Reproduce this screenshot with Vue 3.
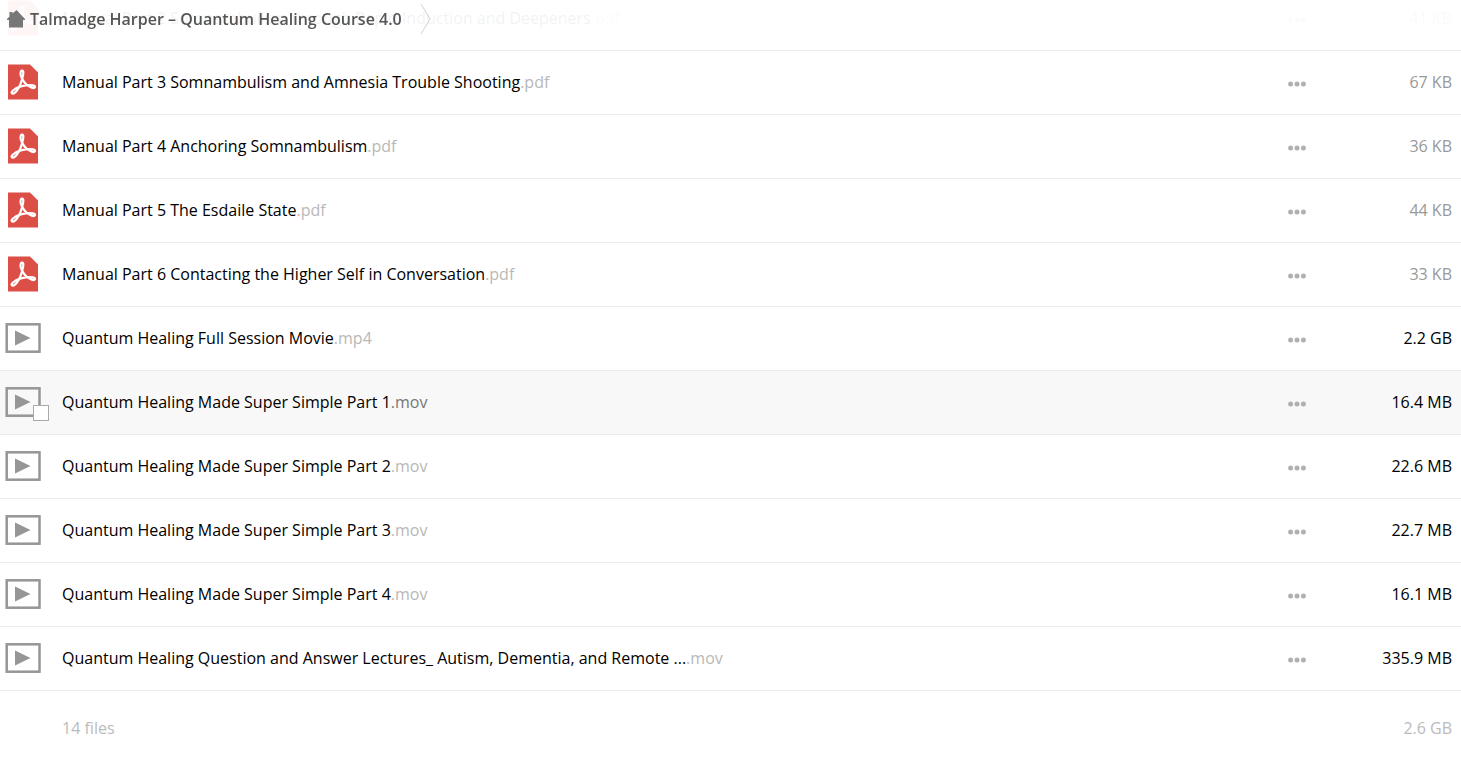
<template>
  <div class="folder">
    <header class="breadcrumbs">
      <a href="#" class="crumb">
        <svg class="home" viewBox="0 0 18 18" aria-hidden="true">
          <path d="M9.500 0 L18 9 V10 H16 V17.500 H2 V10 H0 V9 L2.500 6.400 V2 H5.500 V3.600 Z" />
        </svg>
        <span>Talmadge Harper – Quantum Healing Course 4.0</span>
      </a>
      <svg class="chevron" viewBox="0 0 12 32" aria-hidden="true">
        <path d="M1 1 L10 16 L1 31" />
      </svg>
    </header>

    <main>
      <ul class="files">
        <li v-for="file in files" :key="file.name" class="file" :class="{ hovered: file.hovered }">
          <div class="thumb">
            <svg v-if="file.ext === 'pdf'" class="icon" viewBox="0 0 36 36" aria-hidden="true">
              <path class="pdf-page" d="M3 0.500 H25 L33 8.500 V35.500 H3 Z" />
              <path
                class="pdf-mark"
                d="M17 14.500 C15 11 15 7 17 6.500 C19 6.500 18.500 11 17 15.500 C15.500 20.500 12.500 27 9.500 29 C7 30.500 5.500 28.500 8 26.500 C11 24 17 21.800 22 21.200 C27 20.800 30.500 21.500 30 23.300 C29 25 25 23.500 21.500 20.500 C19.500 18.800 18 16.500 17 14.500 Z"
              />
            </svg>
            <svg v-else class="icon" viewBox="0 0 36 36" aria-hidden="true">
              <rect class="video-frame" x="1.700" y="4.300" width="32.800" height="27.400" />
              <path class="video-play" d="M10 10.500 L25.500 18 L10 25.500 Z" />
            </svg>
            <input v-if="file.hovered" type="checkbox" class="check" :aria-label="`Select ${file.name}`">
          </div>
          <a href="#" class="name">{{ file.name }}<span class="ext">.{{ file.ext }}</span></a>
          <button type="button" class="more" :aria-label="`Actions for ${file.name}`">
            <svg viewBox="0 0 18 6" aria-hidden="true">
              <circle cx="2.600" cy="3" r="2.500" />
              <circle cx="9" cy="3" r="2.500" />
              <circle cx="15.400" cy="3" r="2.500" />
            </svg>
          </button>
          <span class="size" :class="{ small: file.size.endsWith('KB') }">{{ file.size }}</span>
        </li>
      </ul>
      <div class="summary">
        <span>14 files</span>
        <span>2.6 GB</span>
      </div>
    </main>
  </div>
</template>

<script setup>
import { ref } from 'vue'

const files = ref([
  { name: 'Manual Part 2 Somnambulism through Rapid Induction and Deepeners', ext: 'pdf', size: '41 KB' },
  { name: 'Manual Part 3 Somnambulism and Amnesia Trouble Shooting', ext: 'pdf', size: '67 KB' },
  { name: 'Manual Part 4 Anchoring Somnambulism', ext: 'pdf', size: '36 KB' },
  { name: 'Manual Part 5 The Esdaile State', ext: 'pdf', size: '44 KB' },
  { name: 'Manual Part 6 Contacting the Higher Self in Conversation', ext: 'pdf', size: '33 KB' },
  { name: 'Quantum Healing Full Session Movie', ext: 'mp4', size: '2.2 GB' },
  { name: 'Quantum Healing Made Super Simple Part 1', ext: 'mov', size: '16.4 MB', hovered: true },
  { name: 'Quantum Healing Made Super Simple Part 2', ext: 'mov', size: '22.6 MB' },
  { name: 'Quantum Healing Made Super Simple Part 3', ext: 'mov', size: '22.7 MB' },
  { name: 'Quantum Healing Made Super Simple Part 4', ext: 'mov', size: '16.1 MB' },
  { name: 'Quantum Healing Question and Answer Lectures_ Autism, Dementia, and Remote ...', ext: 'mov', size: '335.9 MB' }
])
</script>

<style>
body {
  margin: 0;
  background: #fff;
}
</style>

<style scoped>
.folder {
  font-family: "Open Sans", "Noto Sans", sans-serif;
  font-size: 16px;
  line-height: 24px;
  color: #000;
}

/* Stays over the list while it scrolls underneath */
.breadcrumbs {
  position: fixed;
  top: 0;
  left: 0;
  right: 0;
  z-index: 1;
  display: flex;
  align-items: center;
  gap: 18px;
  height: 38px;
  padding: 0 7px;
  background: rgba(255, 255, 255, 0.95);
}

.crumb {
  display: flex;
  align-items: center;
  gap: 5px;
  color: #555;
  font-weight: 600;
  text-decoration: none;
}

.home {
  width: 18px;
  height: 18px;
  fill: #777;
}

.chevron {
  width: 12px;
  height: 32px;
  fill: none;
  stroke: #d2d2d2;
}

.files {
  margin: -13px 0 0;
  padding: 0;
  list-style: none;
}

.file {
  display: flex;
  align-items: center;
  box-sizing: border-box;
  height: 64px;
  padding: 0 9px 2px 5px;
  border-bottom: 1px solid #ebebeb;
}

.file.hovered {
  background: #f8f8f8;
}

.thumb {
  position: relative;
  flex: none;
  width: 57px;
  height: 36px;
}

.icon {
  display: block;
  width: 36px;
  height: 36px;
}

.pdf-page {
  fill: #dc4f46;
}

.pdf-mark {
  fill: none;
  stroke: #fff;
  stroke-width: 2.2;
}

.video-frame {
  fill: none;
  stroke: #969696;
  stroke-width: 2.5;
}

.video-play {
  fill: #969696;
}

.check {
  position: absolute;
  left: 28px;
  bottom: -1px;
  width: 16px;
  height: 16px;
  box-sizing: border-box;
  margin: 0;
  appearance: none;
  border: 1px solid #aaa;
  background: #fff;
}

.name {
  flex: 1;
  min-width: 0;
  overflow: hidden;
  white-space: nowrap;
  color: #000;
  text-decoration: none;
}

.ext {
  color: #b8b8b8;
}

.hovered .ext {
  color: #777;
}

.more {
  flex: none;
  padding: 4px 0 0;
  border: 0;
  background: none;
  line-height: 0;
  cursor: pointer;
}

.more svg {
  width: 18px;
  height: 6px;
  fill: #b0b0b0;
}

.size {
  flex: none;
  width: 146px;
  text-align: right;
}

.size.small {
  color: #999;
}

.summary {
  display: flex;
  justify-content: space-between;
  padding: 25px 9px 29px 62px;
  color: #bbb;
}
</style>
